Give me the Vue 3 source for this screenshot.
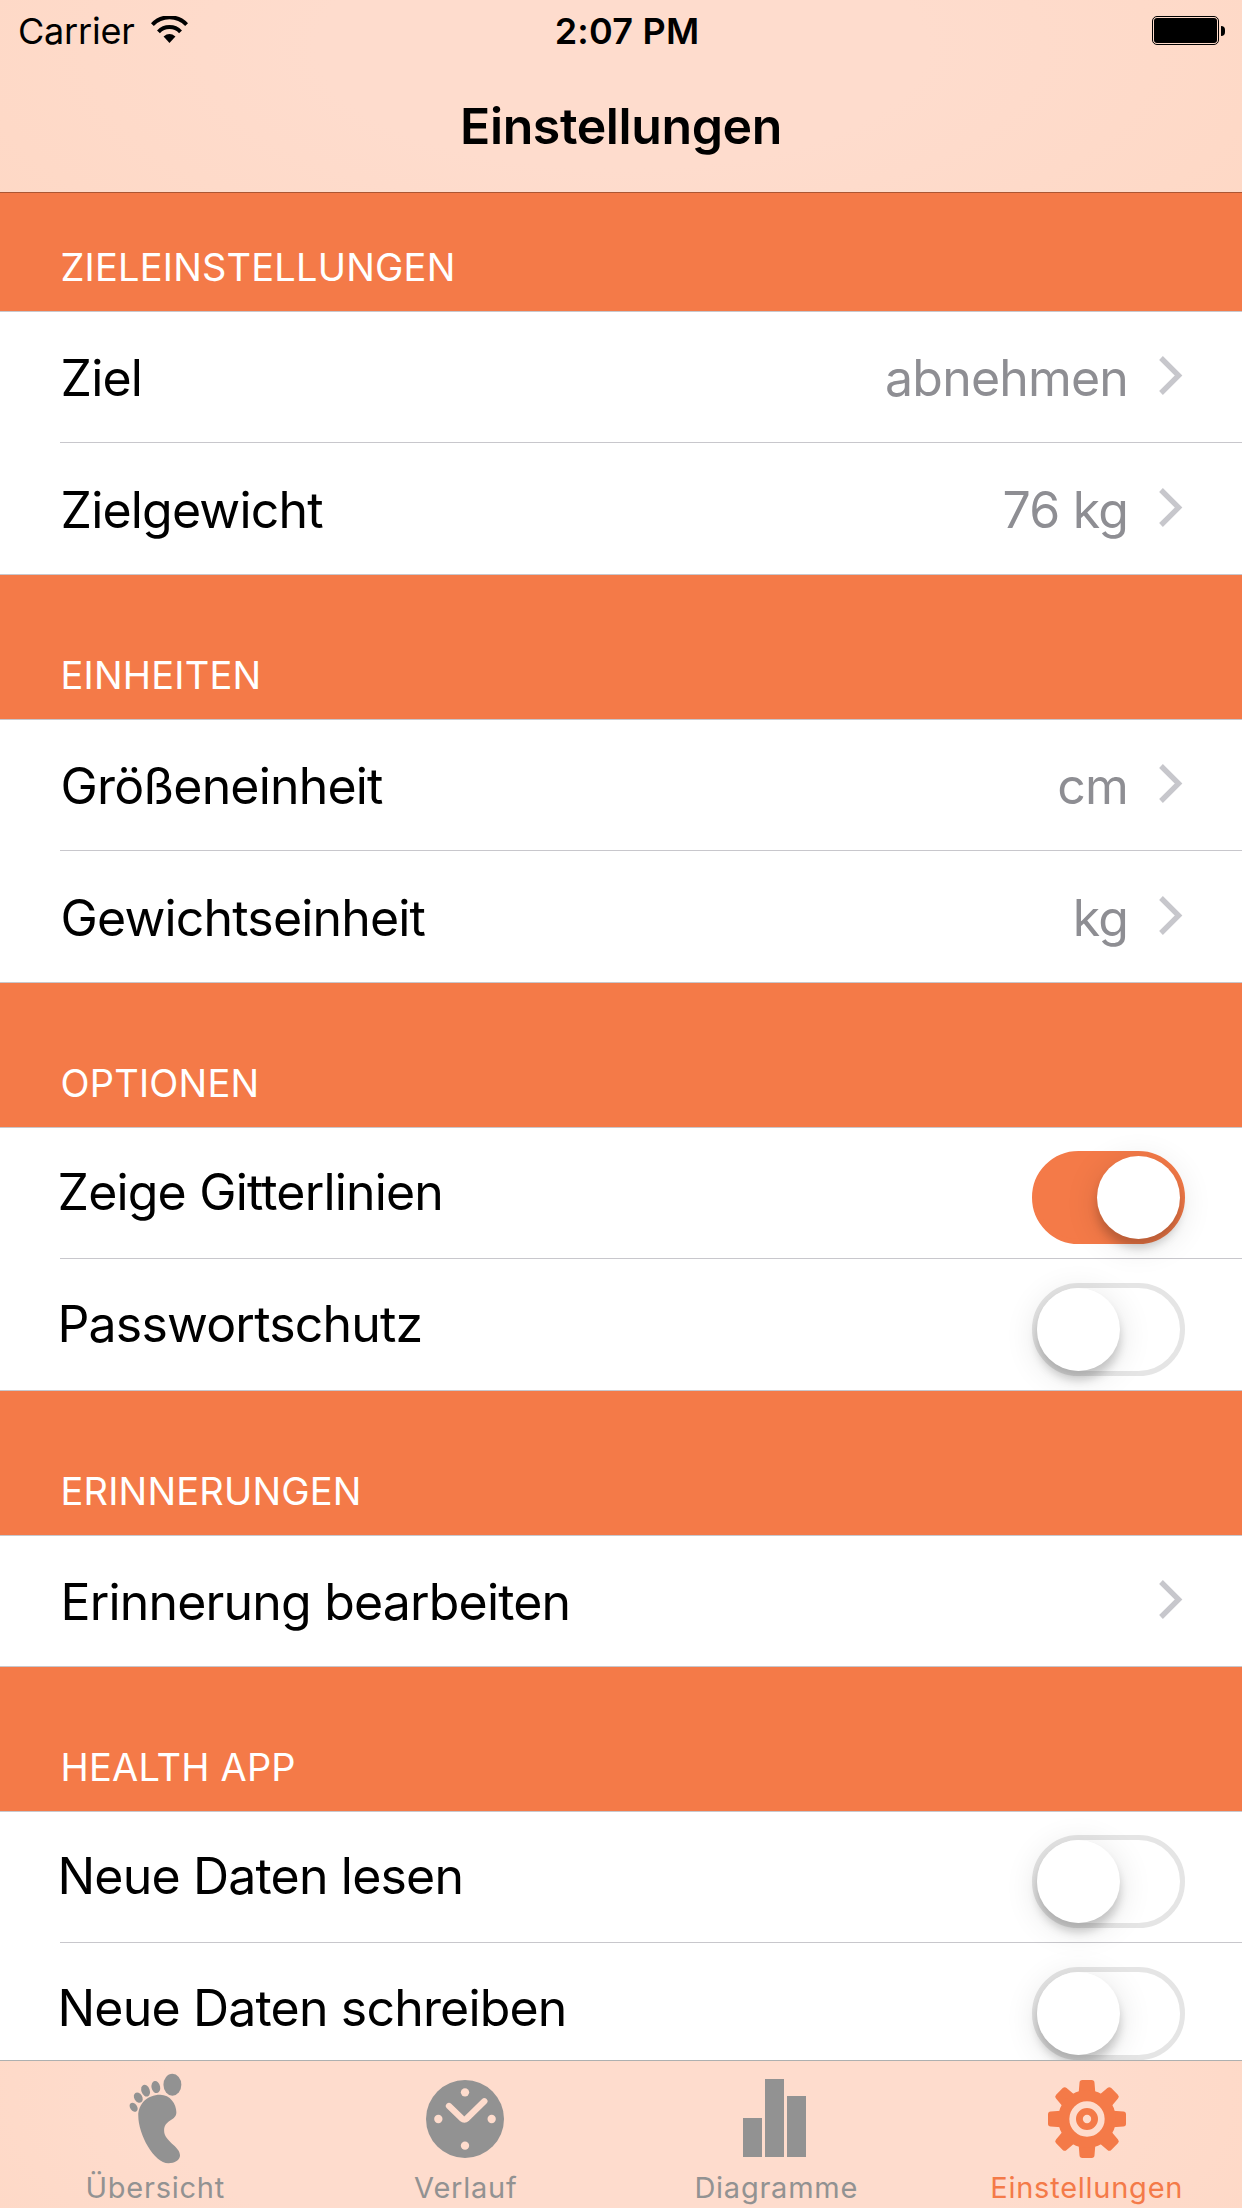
<template>
  <div class="screen">
    <header class="navbar">
      <div class="status">
        <div class="status-left">
          <span class="carrier">Carrier</span>
          <svg class="wifi" viewBox="0 0 112 82">
            <path d="M4 26A72 72 0 0 1 108 26" fill="none" stroke="#000" stroke-width="12" />
            <path d="M22.500 48A46 46 0 0 1 89.500 48" fill="none" stroke="#000" stroke-width="12" />
            <path d="M38 62Q56 47 74 62L56 82Z" fill="#000" />
          </svg>
        </div>
        <span class="time">2:07 PM</span>
        <div class="battery">
          <div class="battery-body"><div class="battery-fill"></div></div>
          <div class="battery-cap"></div>
        </div>
      </div>
      <h1 class="title">Einstellungen</h1>
    </header>

    <main class="list">
      <section v-for="section in sections" :key="section.title">
        <h2 class="section-title">{{ section.title }}</h2>
        <div class="group">
          <div
            v-for="row in section.rows"
            :key="row.label"
            class="row"
            :class="{ 'row-toggle': row.toggle }"
          >
            <span class="label">{{ row.label }}</span>
            <button
              v-if="row.toggle"
              class="switch"
              :class="{ on: row.on }"
              :aria-label="row.label"
              @click="row.on = !row.on"
            >
              <span class="knob"></span>
            </button>
            <template v-else>
              <span class="value">{{ row.value }}</span>
              <svg class="chevron" viewBox="0 0 24 39">
                <path d="M2 2L19.600 19.500L2 37" fill="none" stroke="#c7c7cc" stroke-width="5.300" />
              </svg>
            </template>
          </div>
        </div>
      </section>
    </main>

    <nav class="tabbar">
      <a
        v-for="tab in tabs"
        :key="tab.id"
        class="tab"
        :class="{ active: tab.id === activeTab }"
        @click="activeTab = tab.id"
      >
        <div class="tab-icon">
          <svg v-if="tab.id === 'overview'" class="foot" viewBox="0 0 160 272" fill="currentColor">
            <ellipse cx="131" cy="34" rx="27" ry="33" />
            <ellipse cx="81" cy="41" rx="13" ry="18.500" transform="rotate(-12 81 41)" />
            <ellipse cx="50" cy="52" rx="12.500" ry="18.500" transform="rotate(-20 50 52)" />
            <ellipse cx="28" cy="73" rx="12" ry="16.500" transform="rotate(-32 28 73)" />
            <ellipse cx="14" cy="102" rx="10.500" ry="15" transform="rotate(-36 14 102)" />
            <path
              d="M94 64C124 64 143 92 143 117C143 144 106 138 106 173C106 205 154 220 154 247C154 262 138 271 119 271C76 271 28 185 28 127C28 92 55 64 94 64Z"
            />
          </svg>
          <svg v-else-if="tab.id === 'history'" class="clock" viewBox="0 0 234 234">
            <circle cx="117" cy="117" r="117" fill="currentColor" />
            <g fill="#fedccd">
              <circle cx="117" cy="37" r="12.500" />
              <circle cx="37" cy="117" r="12.500" />
              <circle cx="197" cy="117" r="12.500" />
              <circle cx="117" cy="197" r="12.500" />
            </g>
            <path
              d="M69 78L107 115Q115 122 123 115L175 64"
              fill="none"
              stroke="#fedccd"
              stroke-width="19"
              stroke-linecap="round"
              stroke-linejoin="round"
            />
          </svg>
          <svg v-else-if="tab.id === 'charts'" class="bars" viewBox="0 0 189 234" fill="currentColor">
            <rect x="0" y="117" width="57" height="117" />
            <rect x="66" y="0" width="57" height="234" />
            <rect x="132" y="51" width="57" height="183" />
          </svg>
          <svg v-else class="gear" viewBox="-117 -117 234 234" fill="currentColor">
            <path
              v-for="n in 8"
              :key="n"
              d="M-25 -78L-22.500 -109Q-22 -117 -14 -117H14Q22 -117 22.500 -109L25 -78Z"
              :transform="`rotate(${n * 45})`"
            />
            <circle r="87" />
            <circle r="43" fill="none" stroke="#fedccd" stroke-width="20" />
            <circle r="12.500" fill="#fedccd" />
          </svg>
        </div>
        <span class="tab-label">{{ tab.label }}</span>
      </a>
    </nav>
  </div>
</template>

<script setup>
import { ref } from "vue";

const sections = ref([
  {
    title: "ZIELEINSTELLUNGEN",
    rows: [
      { label: "Ziel", value: "abnehmen" },
      { label: "Zielgewicht", value: "76 kg" },
    ],
  },
  {
    title: "EINHEITEN",
    rows: [
      { label: "Größeneinheit", value: "cm" },
      { label: "Gewichtseinheit", value: "kg" },
    ],
  },
  {
    title: "OPTIONEN",
    rows: [
      { label: "Zeige Gitterlinien", toggle: true, on: true },
      { label: "Passwortschutz", toggle: true, on: false },
    ],
  },
  {
    title: "ERINNERUNGEN",
    rows: [{ label: "Erinnerung bearbeiten", value: "" }],
  },
  {
    title: "HEALTH APP",
    rows: [
      { label: "Neue Daten lesen", toggle: true, on: false },
      { label: "Neue Daten schreiben", toggle: true, on: false },
    ],
  },
]);

const tabs = [
  { id: "overview", label: "Übersicht" },
  { id: "history", label: "Verlauf" },
  { id: "charts", label: "Diagramme" },
  { id: "settings", label: "Einstellungen" },
];
const activeTab = ref("settings");
</script>

<style>
body {
  margin: 0;
}
</style>

<style scoped>
.screen {
  display: flex;
  flex-direction: column;
  height: 2208px;
  overflow: hidden;
  background: #f47a48;
  color: #000;
  font-family: Inter, "Liberation Sans", sans-serif;
}

/* Navigation bar */
.navbar {
  box-sizing: border-box;
  flex: none;
  height: 193px;
  border-bottom: 1px solid #ab5633;
  background: radial-gradient(ellipse 760px 300px at 50% 25%, #fedccd 40%, #fed8c5 100%);
}

.status {
  display: grid;
  grid-template-columns: 1fr auto 1fr;
  align-items: center;
  height: 62px;
  padding: 0 17px 0 18px;
  font-size: 36px;
  line-height: 62px;
}

.status-left {
  display: flex;
  align-items: center;
}

.carrier {
  letter-spacing: -0.2px;
}

.wifi {
  width: 37px;
  height: 27px;
  margin: 0 0 3px 16px;
}

.time {
  padding-left: 11px;
  font-weight: 600;
  letter-spacing: 0.2px;
}

.battery {
  display: flex;
  align-items: center;
  justify-content: flex-end;
  gap: 2px;
}

.battery-body {
  box-sizing: border-box;
  width: 67px;
  height: 29px;
  margin-bottom: 1px;
  padding: 1px;
  border: 1px solid #000;
  border-radius: 5px;
}

.battery-fill {
  height: 100%;
  border-radius: 3px;
  background: #000;
}

.battery-cap {
  width: 4px;
  height: 10px;
  border-radius: 0 4px 4px 0;
  background: #000;
}

.title {
  margin: 0;
  padding-top: 34px;
  font-size: 50px;
  font-weight: 600;
  letter-spacing: -0.4px;
  line-height: 60px;
  text-align: center;
}

/* Grouped list */
.list {
  flex: 1;
  min-height: 0;
  overflow: hidden;
}

.section-title {
  box-sizing: border-box;
  height: 144px;
  margin: 0;
  padding: 78px 0 0 60.500px;
  color: #fff;
  font-size: 38px;
  font-weight: 400;
  letter-spacing: 0.2px;
  line-height: 44px;
}

section:first-child .section-title {
  height: 118px;
  padding-top: 52px;
}

.group {
  overflow: hidden;
  border-top: 1px solid #c8c7cc;
  border-bottom: 1px solid #c8c7cc;
  background: #fff;
}

.row {
  display: flex;
  align-items: center;
  height: 130px;
  padding: 0 59px 0 60px;
  font-size: 50px;
  letter-spacing: -0.82px;
  line-height: 60px;
}

.row + .row {
  height: 131px;
  border-top: 1px solid #c8c7cc;
  margin-left: 60px;
  padding-left: 0;
}

.label {
  flex: 1;
  padding: 2px 0 0 0.500px;
}

.row-toggle .label {
  margin-left: -2.500px;
  padding: 0 0 2px;
}

.value {
  padding-top: 2px;
  color: #8e8e93;
}

.chevron {
  width: 24px;
  height: 39px;
  margin: 0 0 3px 31px;
}

.switch {
  box-sizing: border-box;
  flex: none;
  align-self: flex-start;
  width: 153px;
  height: 93px;
  margin: 23px -2px 0 0;
  padding: 0;
  border: 5px solid #e5e5e5;
  border-radius: 47px;
  background: #fff;
  text-align: left;
}

.row + .row .switch {
  margin-top: 24px;
}

.knob {
  display: block;
  width: 83px;
  height: 83px;
  border-radius: 50%;
  background: #fff;
  box-shadow: 0 6px 34px rgba(0, 0, 0, 0.12), 0 9px 10px rgba(0, 0, 0, 0.18);
}

.switch.on {
  border-color: #f47a48;
  background: #f47a48;
}

.switch.on .knob {
  margin-left: 60px;
}

/* Tab bar */
.tabbar {
  position: relative;
  box-sizing: border-box;
  display: flex;
  flex: none;
  height: 148px;
  border-top: 1px solid #adb0b0;
  background: radial-gradient(ellipse 760px 300px at 50% 25%, #fedccd 60%, #fed8c5 100%);
}

.tab {
  display: flex;
  flex: 1;
  flex-direction: column;
  align-items: center;
  color: #929292;
}

.tab.active {
  color: #f47a48;
}

.tab-icon {
  display: flex;
  align-items: center;
  justify-content: center;
  height: 115px;
}

.foot {
  width: 53px;
  height: 91px;
}

.clock,
.gear {
  width: 78px;
  height: 78px;
}

.clock {
  margin-right: 2px;
}

.bars {
  width: 63px;
  height: 78px;
  margin: 0 3px 1px 0;
}

.tab-label {
  margin-top: -5px;
  font-size: 29px;
  letter-spacing: 0.75px;
  line-height: 34px;
}
</style>
